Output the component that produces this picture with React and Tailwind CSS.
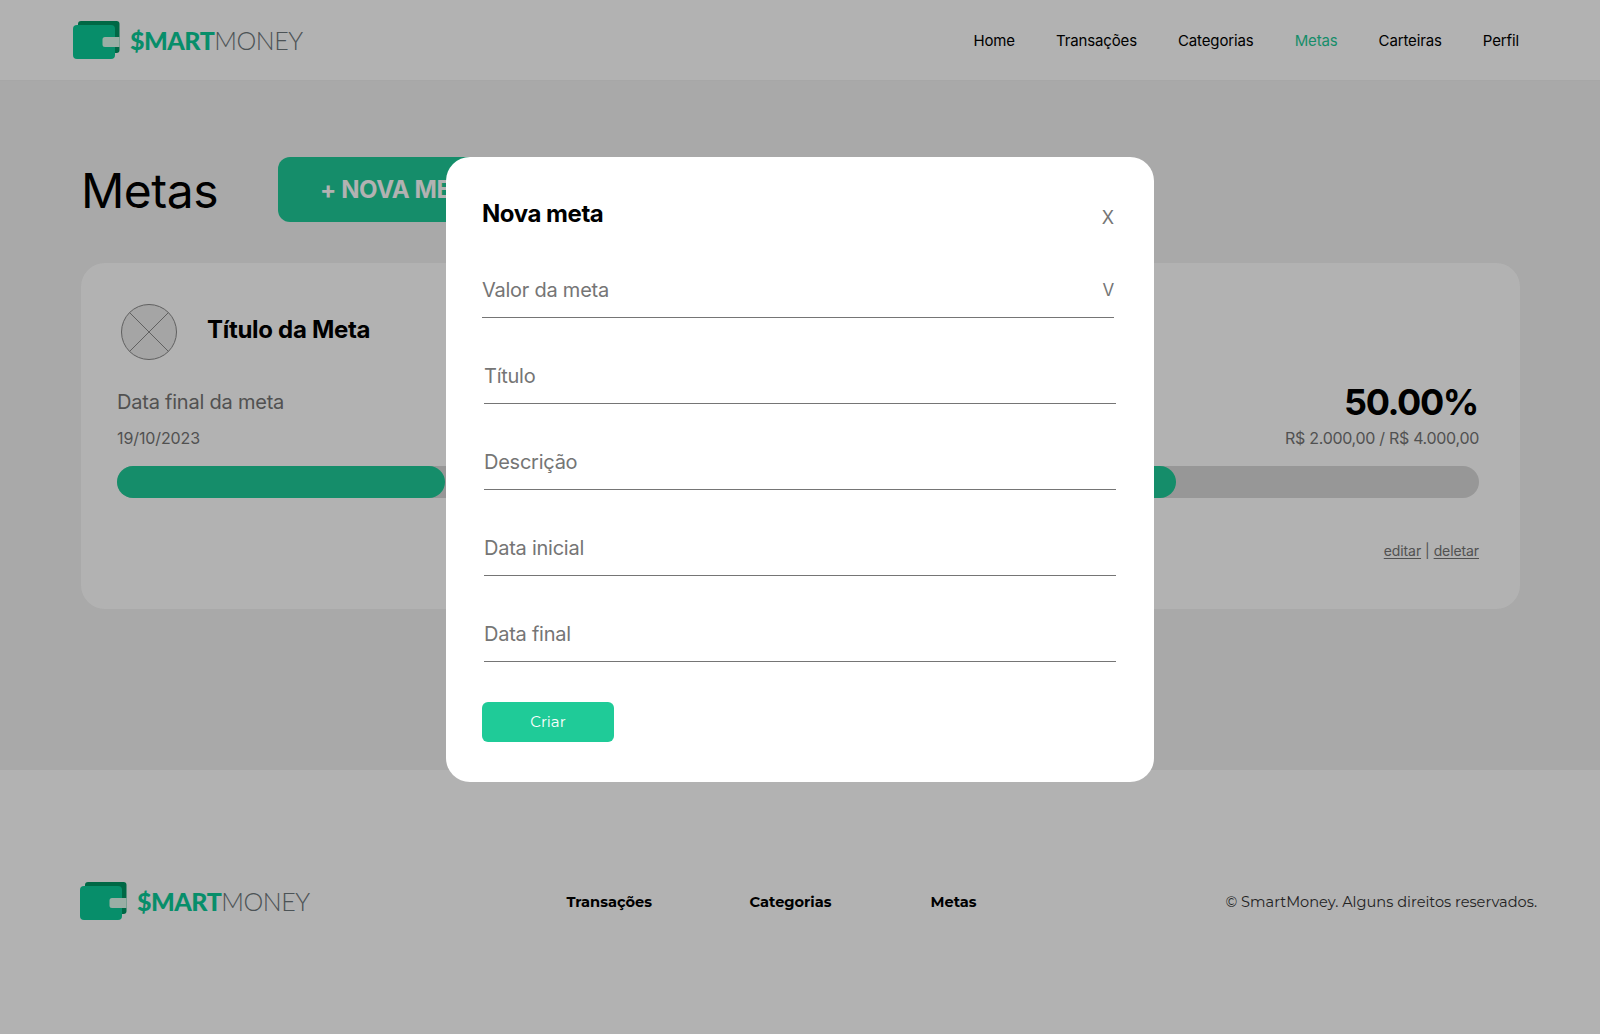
const NAV = ['Home', 'Transações', 'Categorias', 'Metas', 'Carteiras', 'Perfil']
const FIELDS = ['Título', 'Descrição', 'Data inicial', 'Data final']

function Logo() {
  return (
    <div className="flex items-center gap-[10px]">
      <svg width="47" height="38" viewBox="0 0 47 38">
        <path d="M5 3a3 3 0 0 1 3-3h35.5a3 3 0 0 1 3 3v26a3 3 0 0 1-3 3H5z" fill="#009664" />
        <rect x="0" y="4" width="42" height="34" rx="4" fill="#0bcc99" />
        <path d="M32 16h14.5v10H32a2.5 2.5 0 0 1-2.5-2.5v-5A2.5 2.5 0 0 1 32 16z" fill="#ddfaec" />
      </svg>
      <span className="font-['Lato',sans-serif] text-[25px] leading-none tracking-[-0.5px] whitespace-nowrap">
        <span className="font-black text-[#0bcc99]">$MART</span>
        <span className="font-light text-[#6e777b]">MONEY</span>
      </span>
    </div>
  )
}

function Header() {
  return (
    <header className="h-[81px] flex items-center justify-between pl-[73px] pr-[81px] bg-white border-b border-[#f0f0f0]">
      <Logo />
      <nav className="flex gap-[41px] pt-[3px] text-[15px] font-normal tracking-[-0.13px]">
        {NAV.map((item) => (
          <a key={item} className={item === 'Metas' ? 'text-[#1fcb98]' : 'text-black'}>{item}</a>
        ))}
      </nav>
    </header>
  )
}

function GoalCard() {
  return (
    <div className="mt-[41px] h-[346px] rounded-[24px] bg-white pt-[41px] pl-[36px] pr-[41px]">
      <div className="flex items-center gap-[30px] pl-[4px]">
        <svg width="56" height="56" viewBox="0 0 56 56">
          <circle cx="28" cy="28" r="27.5" fill="#ececec" stroke="#8a8a8a" />
          <path d="M8.5 8.5l39 39M47.5 8.5l-39 39" stroke="#8a8a8a" />
        </svg>
        <h2 className="text-[24px] font-bold text-black leading-none tracking-[-0.3px] -mt-[4px]">Título da Meta</h2>
      </div>
      <div className="flex justify-between items-end mt-[16px]">
        <div>
          <div className="mt-[14px] text-[20px] leading-[24px] tracking-[-0.22px] text-[#757575]">Data final da meta</div>
          <div className="mt-[14px] text-[16px] leading-[20px] tracking-[-0.1px] text-[#757575]">19/10/2023</div>
        </div>
        <div className="text-right">
          <div className="text-[36px] font-bold leading-[44px] tracking-[-1.4px] text-black pr-[1px]">50.00%</div>
          <div className="mt-[4px] text-[16px] leading-[20px] tracking-[-0.3px] text-[#757575]">R$ 2.000,00 / R$ 4.000,00</div>
        </div>
      </div>
      <div className="mt-[18px] h-[32px] flex rounded-full bg-[#d9d9d9]">
        <div className="h-full w-[328px] rounded-full bg-[#1fcb98]" />
        <div className="h-full w-[200px] ml-[531px] rounded-full bg-[#1fcb98]" />
      </div>
      <div className="mt-[44px] flex justify-end items-center gap-[4px] text-[14px] leading-[17px] tracking-[-0.1px] text-[#757575]">
        <a className="underline underline-offset-2">editar</a>
        <span>|</span>
        <a className="underline underline-offset-2">deletar</a>
      </div>
    </div>
  )
}

function Main() {
  return (
    <main className="h-[689px] bg-[#f2f2f2] pt-[76px] pl-[81px] pr-[80px]">
      <div className="flex items-center gap-[60px]">
        <h1 className="text-[48px] font-normal leading-[58px] tracking-[-0.5px] text-black w-[137px] pt-[3px]">Metas</h1>
        <button className="w-[300px] h-[65px] rounded-[12px] bg-[#1fcb98] text-white text-[24px] font-bold tracking-[-0.4px] text-left pl-[42px]">
          + NOVA META
        </button>
      </div>
      <GoalCard />
    </main>
  )
}

function Footer() {
  return (
    <footer className="h-[264px] bg-white flex items-start pt-[112px] pl-[80px] pr-[63px] font-['Montserrat','Noto_Sans',sans-serif]">
      <Logo />
      <div className="ml-[257px] flex pt-[11px] text-[14.6px] font-bold text-black leading-[18px]">
        <a className="w-[183px]">Transações</a>
        <a className="w-[181px]">Categorias</a>
        <a>Metas</a>
      </div>
      <div className="ml-auto pt-[11px] text-[14.6px] leading-[18px] text-[#333]">© SmartMoney. Alguns direitos reservados.</div>
    </footer>
  )
}

function Modal() {
  return (
    <div className="fixed inset-0 bg-black/30 flex justify-center items-start pt-[157px]">
      <div className="w-[708px] h-[625px] rounded-[24px] bg-white pl-[36px] pr-[40px] pt-[41px]">
        <div className="h-[29px] flex justify-between items-start">
          <h3 className="mt-[1px] text-[24px] font-bold leading-[29px] tracking-[-0.45px] text-black">Nova meta</h3>
          <button className="uppercase text-[18px] leading-[24px] text-[#757575] mt-[8px]">x</button>
        </div>
        <div className="mt-[41px] h-[50px] pb-[5px] flex justify-between items-center border-b border-[#757575] text-[20px] tracking-[-0.25px] text-[#757575]">
          <span>Valor da meta</span>
          <span className="uppercase text-[17px] pt-[2px]">v</span>
        </div>
        {FIELDS.map((f) => (
          <div key={f} className="mt-[36px] ml-[2px] -mr-[2px] h-[50px] pb-[5px] flex items-center border-b border-[#757575] text-[20px] tracking-[-0.25px] text-[#757575]">
            {f}
          </div>
        ))}
        <button className="mt-[40px] w-[132px] h-[40px] rounded-[6px] bg-[#1fcb98] text-white text-[15px] font-['Montserrat','Noto_Sans',sans-serif]">
          Criar
        </button>
      </div>
    </div>
  )
}

export default function App() {
  return (
    <div className="min-h-screen font-['Inter',sans-serif]">
      <Header />
      <Main />
      <Footer />
      <Modal />
    </div>
  )
}
